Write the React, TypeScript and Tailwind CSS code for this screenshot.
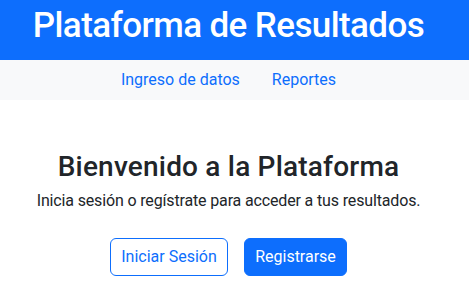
import React from "react";

export default function App() {
  return (
    <div
      className="min-h-screen bg-white text-[#212529]"
      style={{ fontFamily: 'Roboto, "Open Sans", sans-serif' }}
    >
      <header className="bg-[#0d6efd] h-[60px] pt-[4px]">
        <div className="w-[457px] text-center">
          <h1 className="text-[35px] leading-[44px] font-medium tracking-[-0.6px] text-white">
            Plataforma de Resultados
          </h1>
        </div>
      </header>
      <nav className="bg-[#f8f9fa] h-[40px]">
        <div className="w-[457px] flex justify-center">
          <a href="#" className="px-4 py-2 text-[16px] leading-6 text-[#0d6efd]">
            Ingreso de datos
          </a>
          <a href="#" className="px-4 py-2 text-[16px] leading-6 text-[#0d6efd]">
            Reportes
          </a>
        </div>
      </nav>
      <main className="w-[457px] pt-[51px] flex flex-col items-center text-center">
        <h2 className="text-[28px] leading-[32px] font-medium tracking-[0.2px] mb-[6px]">
          Bienvenido a la Plataforma
        </h2>
        <p className="text-[16px] leading-6 tracking-[-0.15px]">
          Inicia sesión o regístrate para acceder a tus resultados.
        </p>
        <div className="mt-[25px] flex justify-center gap-4">
          <button className="h-[38px] w-[118px] rounded-md border border-[#0d6efd] text-[#0d6efd] text-[16px] leading-6">
            Iniciar Sesión
          </button>
          <button className="h-[38px] w-[103px] rounded-md border border-[#0d6efd] bg-[#0d6efd] text-white text-[16px] leading-6">
            Registrarse
          </button>
        </div>
      </main>
    </div>
  );
}
